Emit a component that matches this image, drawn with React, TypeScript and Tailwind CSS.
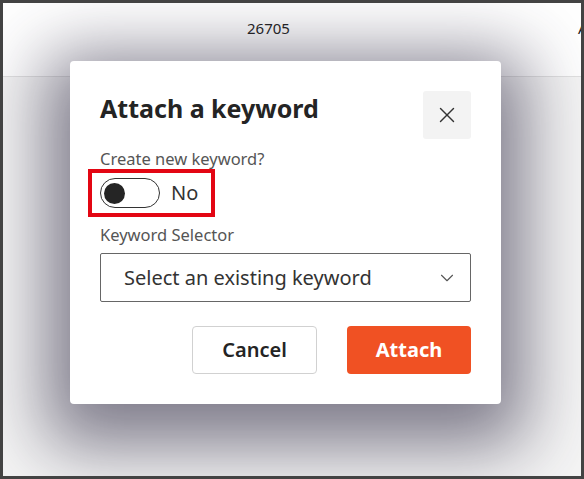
import { X, ChevronDown } from 'lucide-react'

function Toggle() {
  return (
    <div className="flex items-center gap-[11px] border-4 border-[#e30613] w-[127px] h-[48px] pl-[8px] -ml-[12px]">
      <div className="w-[60px] h-[30px] rounded-full border border-[#333] flex items-center pl-[3px]">
        <div className="w-[21px] h-[21px] rounded-full bg-[#252525]" />
      </div>
      <span className="text-[20px] text-[#333]">No</span>
    </div>
  )
}

function AttachDialog() {
  return (
    <div className="absolute left-[67px] top-[58px] w-[431px] h-[343px] bg-white rounded-[4px] shadow-[0_18px_70px_24px_rgba(40,35,60,0.58)] px-[30px] pt-[30px]">
      <div className="flex items-start justify-between">
        <h2 className="text-[25px] font-bold text-[#242424] leading-[32px] mt-[1px]">Attach a keyword</h2>
        <button className="w-[48px] h-[48px] bg-[#f3f3f3] rounded-[3px] flex items-center justify-center text-[#333]">
          <X size={26} strokeWidth={1.3} />
        </button>
      </div>

      <div className="mt-[9px] text-[16.5px] text-[#555] leading-[22px]">Create new keyword?</div>
      <div className="-mt-[1px]">
        <Toggle />
      </div>

      <div className="mt-[7px] text-[16.5px] text-[#555] leading-[22px]">Keyword Selector</div>
      <div className="mt-[7px] h-[49px] border border-[#666] rounded-[2px] flex items-center justify-between pl-[23px] pr-[12px]">
        <span className="text-[20px] text-[#333]">Select an existing keyword</span>
        <ChevronDown size={22} strokeWidth={1.2} className="text-[#555]" />
      </div>

      <div className="mt-[24px] flex justify-end gap-[30px]">
        <button className="w-[125px] h-[48px] border border-[#d1d1d1] rounded-[4px] text-[20px] font-semibold text-[#242424]">
          Cancel
        </button>
        <button className="w-[124px] h-[48px] bg-[#f05123] rounded-[4px] text-[20px] font-bold text-white">
          Attach
        </button>
      </div>
    </div>
  )
}

export default function App() {
  return (
    <div className="h-[479px] w-[584px] border-[3px] border-[#434343] bg-[#f5f5f5] relative overflow-hidden font-['Noto_Sans',sans-serif]">
      <div className="h-[74px] bg-white border-b border-[#e1e1e1] flex items-start pt-[14px] relative overflow-hidden">
        <span className="ml-[244px] text-[15px] text-[#242424]">26705</span>
        <span className="absolute left-[575px] top-[14px] text-[15px] text-[#242424]">A</span>
      </div>
      <AttachDialog />
    </div>
  )
}
